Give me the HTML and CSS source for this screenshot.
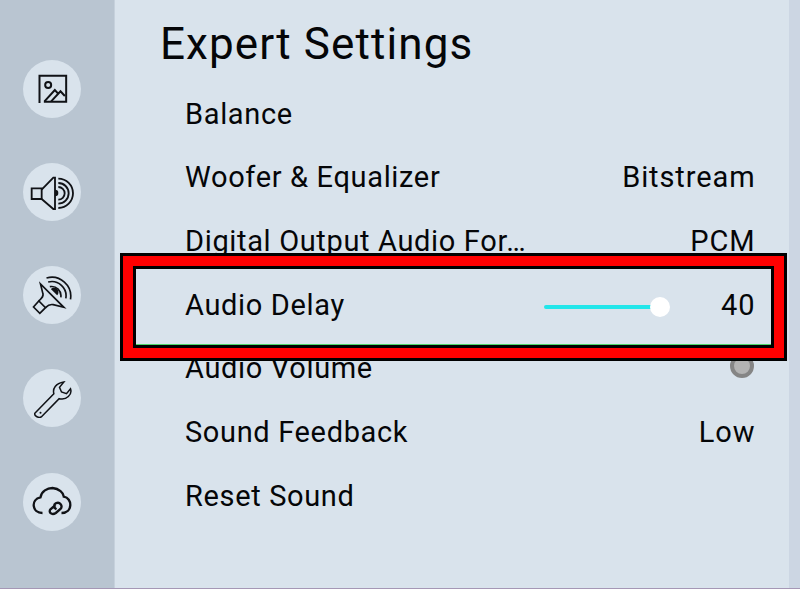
FILE: index.html
```html
<!DOCTYPE html>
<html lang="en">
<head>
<meta charset="utf-8">
<title>Expert Settings</title>
<link rel="stylesheet" href="styles.css">
</head>
<body>
<div class="screen">
  <nav class="rail">
    <div class="rail-btn"><svg viewBox="106.500 67 96 96" class="ico ico-pic"><path d="M117 157V75H197V153H130"/><circle cx="143" cy="103" r="9"/><path d="M132 152L163 118L175 131M152 152L180 122L193 136"/></svg></div>
    <div class="rail-btn"><svg viewBox="87 370 135 110" class="ico ico-spk"><path d="M95 416H125V448H95Z"/><path d="M125 420L160 384H165V478H160L125 448"/><path d="M165 420A10 10 0 0 1 165 440Z" class="solid"/><path d="M175 412A19 19 0 0 1 175 450M175 400A31 31 0 0 1 175 462M175 387A44 44 0 0 1 175 475"/></svg></div>
    <div class="rail-btn"><svg viewBox="93.500 45 122 122" class="ico ico-dish"><path d="M101 141L120 160L137 143L117 123Z"/><path d="M117 123C128 113 132 108 129 100L122 72L192 142L160 134C150 132 144 136 137 143"/><path d="M153 87L172 106A13 13 0 0 0 153 87Z" class="solid"/><path d="M150 80A28 28 0 0 1 183 112M145 66A43 43 0 0 1 198 115M140 54A57 57 0 0 1 212 118"/></svg></div>
    <div class="rail-btn"><svg viewBox="94.500 356 120 120" class="ico ico-wrench"><path d="M103 462L160 403C156 388 165 372 190 368L177 384L183 398L198 403L210 388C216 405 198 424 176 418L123 472C116 478 100 470 103 462Z"/><circle cx="120" cy="460" r="3" class="solid"/></svg></div>
    <div class="rail-btn"><svg viewBox="90.500 673 128 100" class="ico ico-cloud"><path d="M128 757C96 757 92 716 122 710C125 692 142 682 158 682C178 684 191 696 192 708C218 712 220 757 185 757"/><path d="M167 733L152 746C145 754 155 765 168 757L182 745C190 735 180 722 168 728C160 733 162 742 170 746"/></svg></div>
  </nav>
  <main class="panel">
    <h1 class="title">Expert Settings</h1>
    <ul class="rows">
      <li class="row"><span>Balance</span></li>
      <li class="row"><span>Woofer &amp; Equalizer</span><span class="val">Bitstream</span></li>
      <li class="row"><span>Digital Output Audio For…</span><span class="val">PCM</span></li>
      <li class="row"><span>Audio Delay</span><span class="slider"><span class="track"></span><span class="thumb"></span></span><span class="val">40</span></li>
      <li class="row"><span>Audio Volume</span><span class="toggle"></span></li>
      <li class="row"><span>Sound Feedback</span><span class="val">Low</span></li>
      <li class="row"><span>Reset Sound</span></li>
    </ul>
  </main>
  <div class="edge"></div>
  <div class="highlight"><div class="highlight-red"><div class="highlight-in"></div></div></div>
</div>
</body>
</html>
```
FILE: styles.css
```css
html, body { margin: 0; padding: 0; }
body { width: 800px; height: 589px; overflow: hidden; font-family: "Roboto", "Liberation Sans", sans-serif; color: #050608; }
.screen { position: relative; display: flex; width: 800px; height: 588px; border-bottom: 1px solid #a597b5; background: #d9e3ec; }
.rail { box-sizing: border-box; width: 114.500px; flex: none; background: #b9c5d1; border-right: 1px solid #c6d1dc; padding: 59.500px 0 0 22.500px; display: flex; flex-direction: column; gap: 45.250px; }
.rail-btn { width: 58px; height: 58px; flex: none; border-radius: 50%; background: #d9e3ec; display: flex; align-items: center; justify-content: center; }
.ico { fill: none; stroke: #101216; stroke-width: 6; }
.ico-pic { width: 32px; height: 32px; }
.ico-spk { width: 45px; height: 36.670px; stroke-width: 5.500; }
.ico-dish { width: 40.670px; height: 40.670px; stroke-width: 5; }
.ico-wrench { width: 40px; height: 40px; stroke-width: 4.500; }
.ico-cloud { width: 42.670px; height: 33.330px; stroke-width: 7; }
.solid { fill: #101216; stroke: none; }
.panel { flex: 1; min-width: 0; padding-left: 45.500px; }
.title { margin: 0; padding-top: 18px; height: 64px; font-size: 44px; line-height: 52px; font-weight: 400; letter-spacing: 1.100px; }
.rows { list-style: none; margin: 0; padding: 0 0 0 25px; width: 570.500px; }
.row { height: 63.670px; display: flex; align-items: center; justify-content: space-between; font-size: 29px; letter-spacing: 0.650px; }
.val { letter-spacing: 0.900px; }
.slider { position: relative; width: 126px; height: 22px; margin-left: auto; margin-right: 51px; }
.track { position: absolute; left: 0; right: 10px; top: 11px; height: 4px; border-radius: 2px; background: #22e6ea; }
.thumb { position: absolute; right: 0; top: 3px; width: 20px; height: 20px; border-radius: 50%; background: #fff; }
.toggle { box-sizing: border-box; width: 24px; height: 24px; margin: 0 2px 4px 0; border-radius: 50%; background: #b3b3b3; border: 4px solid #858585; }
.edge { width: 11px; flex: none; background: #ccd6e3; }
.highlight { position: absolute; left: 120px; top: 253px; width: 667px; height: 108px; box-sizing: border-box; border: 3px solid #000; }
.highlight-red { box-sizing: border-box; height: 100%; border: 10px solid #f00; }
.highlight-in { box-sizing: border-box; height: 100%; border: 3px solid #000; box-shadow: inset 0 -1px 0 #4fd46a; }
```
